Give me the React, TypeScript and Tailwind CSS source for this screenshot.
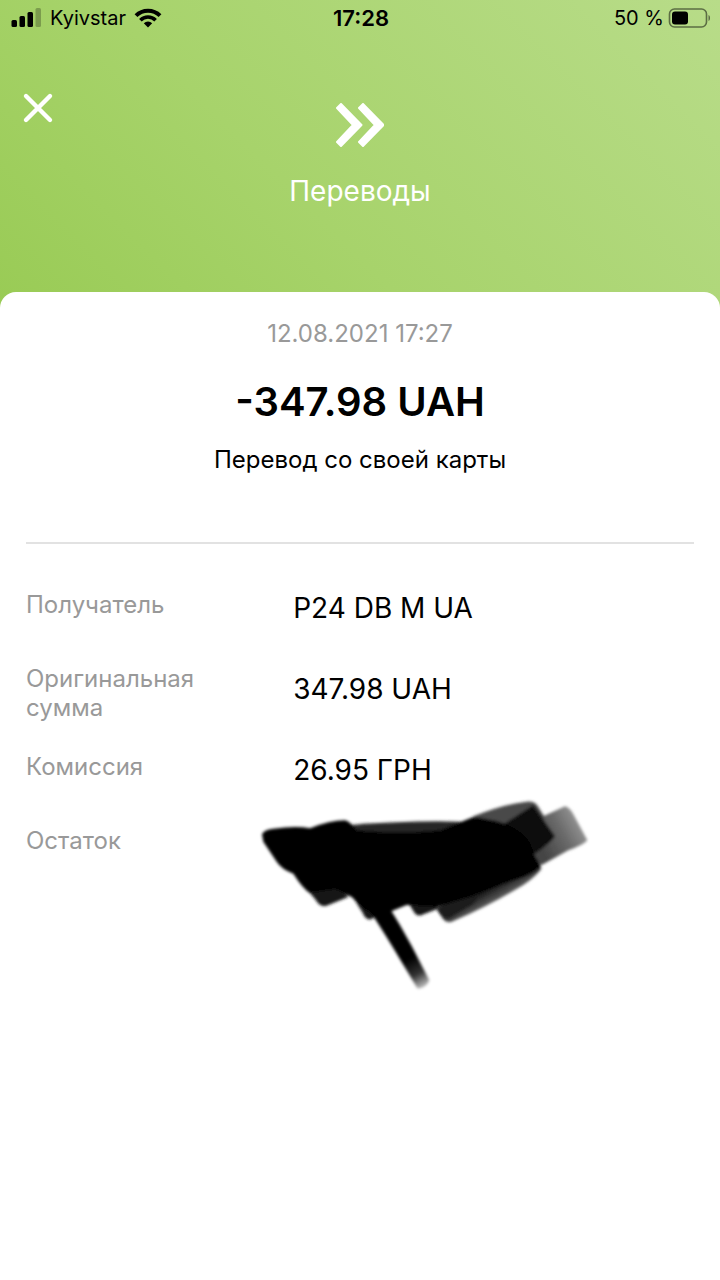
import type { ReactNode } from 'react'

interface Detail {
  label: string
  value: ReactNode
}

const details: Detail[] = [
  { label: 'Получатель', value: 'P24 DB M UA' },
  { label: 'Оригинальная сумма', value: '347.98 UAH' },
  { label: 'Комиссия', value: '26.95 ГРН' },
  { label: 'Остаток', value: <Scribble /> },
]

function SignalIcon() {
  return (
    <svg className="h-5 w-8" viewBox="0 0 32 20" aria-hidden="true">
      <rect x="1.5" y="12" width="5.500" height="7" rx="1.5" />
      <rect x="9.5" y="8" width="5.500" height="11" rx="1.5" />
      <rect x="17.5" y="4" width="5.500" height="15" rx="1.5" />
      <rect x="25.5" y="0" width="5.500" height="19" rx="1.5" opacity="0.25" />
    </svg>
  )
}

function WifiIcon() {
  return (
    <svg className="h-5 w-7" viewBox="0 0 28 20" fill="none" stroke="black" aria-hidden="true">
      <path d="M2 7.600a17 17 0 0 1 24 0" strokeWidth="4" />
      <path d="M6.400 12.200a10.800 10.800 0 0 1 15.200 0" strokeWidth="3.600" />
      <path d="M14 19.500l-4.200-4.200a6 6 0 0 1 8.400 0z" fill="black" stroke="none" />
    </svg>
  )
}

function BatteryIcon() {
  return (
    <svg className="h-5 w-11" viewBox="0 0 44 20" aria-hidden="true">
      <rect x="1.5" y="1" width="37" height="18" rx="5" fill="none" stroke="black" strokeWidth="1.6" opacity="0.5" />
      <rect x="4" y="3.5" width="16" height="13" rx="3" />
      <path d="M40.5 7c2 .6 2 5.4 0 6z" opacity="0.5" />
    </svg>
  )
}

function CloseIcon() {
  return (
    <svg className="h-8 w-8" viewBox="0 0 32 32" fill="none" stroke="white" strokeWidth="4.4" strokeLinecap="round" aria-hidden="true">
      <path d="M4 4l24 24M28 4L4 28" />
    </svg>
  )
}

function TransferIcon() {
  return (
    <svg className="h-11 w-12" viewBox="0 0 48 44" fill="white" stroke="white" strokeWidth="2" strokeLinejoin="round" aria-hidden="true">
      <path d="M1 5l4-4 20.5 21L5 43l-4-4 16-17z" />
      <path d="M23 5l4-4 20.5 21L27 43l-4-4 16-17z" />
    </svg>
  )
}

// marker strokes hiding the balance
function Scribble() {
  return (
    <svg className="absolute -left-[53px] -top-[52px] h-[230px] w-[370px] max-w-none" viewBox="0 0 1110 690" role="img" aria-label="Скрыто">
      <defs>
        <filter id="soft" x="-10%" y="-10%" width="120%" height="120%">
          <feGaussianBlur stdDeviation="5" />
        </filter>
        <linearGradient id="tail" gradientUnits="userSpaceOnUse" x1="430" y1="400" x2="555" y2="625">
          <stop offset="0" stopColor="#000" />
          <stop offset="0.6" stopColor="#060606" />
          <stop offset="0.8" stopColor="#000" stopOpacity="0.8" />
          <stop offset="1" stopColor="#000" stopOpacity="0.15" />
        </linearGradient>
        <linearGradient id="tip" gradientUnits="userSpaceOnUse" x1="900" y1="200" x2="1040" y2="120">
          <stop offset="0" stopColor="#444" />
          <stop offset="0.5" stopColor="#6a6a6a" />
          <stop offset="1" stopColor="#a0a0a0" />
        </linearGradient>
        <linearGradient id="edge" gradientUnits="userSpaceOnUse" x1="740" y1="320" x2="770" y2="375">
          <stop offset="0" stopColor="#0c0c0c" />
          <stop offset="1" stopColor="#777" />
        </linearGradient>
      </defs>
      <g filter="url(#soft)">
        <path fill="url(#tip)" d="M890 115L975 76Q990 80 1000 100L1042 178Q1030 192 985 208L905 252L870 230z" />
        <path fill="#484848" d="M700 106Q790 70 860 62Q885 60 895 78L915 110L850 150H690z" />
        <path fill="#262626" d="M330 132Q520 118 660 122L740 150L600 175H330z" />
        <path fill="url(#edge)" d="M590 385L880 245L905 262Q890 285 850 312Q745 375 640 420Q620 430 608 412z" />
        <path fill="#1c1c1c" d="M590 380L740 310L700 370L640 405Q620 420 608 405z" />
        <path fill="#191919" d="M508 370L600 330L590 385L545 402Q530 408 520 390zM205 330L290 315L325 348L260 374Q240 380 228 358zM340 350L420 360L410 405L390 416Q375 414 368 395z" />
        <path fill="#0d0d0d" d="M790 130L880 72L905 108L945 165Q940 180 885 218L830 200z" />
        <path
          fill="#000"
          d="M66 160Q70 147 100 143Q170 133 210 142Q270 118 315 118Q330 121 350 148Q480 160 600 148L700 108Q740 112 790 126Q850 150 870 185L885 225L903 255Q880 285 800 305L700 345L590 378L500 372L450 392L410 408L380 390L335 348L285 325L210 336Q190 325 160 278Q125 265 110 242L70 182z"
        />
        <path fill="url(#tail)" d="M390 390L445 375Q480 430 515 495L568 598Q557 624 532 622L480 535Q445 475 390 390z" />
      </g>
    </svg>
  )
}

function StatusBar() {
  return (
    <div className="grid h-9 grid-cols-3 items-center pl-2.5 pr-2 text-xl leading-9 text-black">
      <div className="flex items-center gap-2">
        <SignalIcon />
        <span>Kyivstar</span>
        <WifiIcon />
      </div>
      <span className="text-center text-[22px] font-semibold">17:28</span>
      <div className="flex items-center justify-end gap-1">
        <span>50 %</span>
        <BatteryIcon />
      </div>
    </div>
  )
}

export default function App() {
  return (
    <div className="flex min-h-screen flex-col bg-white font-[Inter,'Liberation_Sans',sans-serif]">
      <div className="bg-linear-[45deg,#99cb55,#a7d36b_40%,#b8dc89] pb-4">
        <StatusBar />
        <header className="grid h-64 grid-cols-[1fr_auto_1fr] items-start px-[22px] pt-14">
          <button type="button" aria-label="Закрыть" className="w-8">
            <CloseIcon />
          </button>
          <div className="flex flex-col items-center gap-6 pt-[11px]">
            <TransferIcon />
            <h1 className="text-[28px] leading-10 text-white">Переводы</h1>
          </div>
        </header>
      </div>

      <main className="-mt-4 flex-1 rounded-t-2xl bg-white px-[26px] pt-[26px]">
        <section className="flex flex-col items-center border-b-2 border-[#e2e2e2] pb-[66px] text-center text-2xl text-black">
          <time className="text-[#999]">12.08.2021 17:27</time>
          <p className="mt-6 text-[40px] leading-[56px] font-semibold">-347.98 UAH</p>
          <p className="mt-3.5">Перевод со своей карты</p>
        </section>

        <section className="grid grid-cols-[2fr_3fr] pt-[46px]">
          <ul className="flex flex-col gap-[30px] text-2xl leading-[29px] text-[#999]">
            {details.map((d) => (
              <li key={d.label} className="min-h-11 w-48">
                {d.label}
              </li>
            ))}
          </ul>
          <ul className="flex flex-col gap-[45px] text-[28px] leading-9 text-black">
            {details.map((d) => (
              <li key={d.label} className="relative min-h-9">
                {d.value}
              </li>
            ))}
          </ul>
        </section>
      </main>
    </div>
  )
}
